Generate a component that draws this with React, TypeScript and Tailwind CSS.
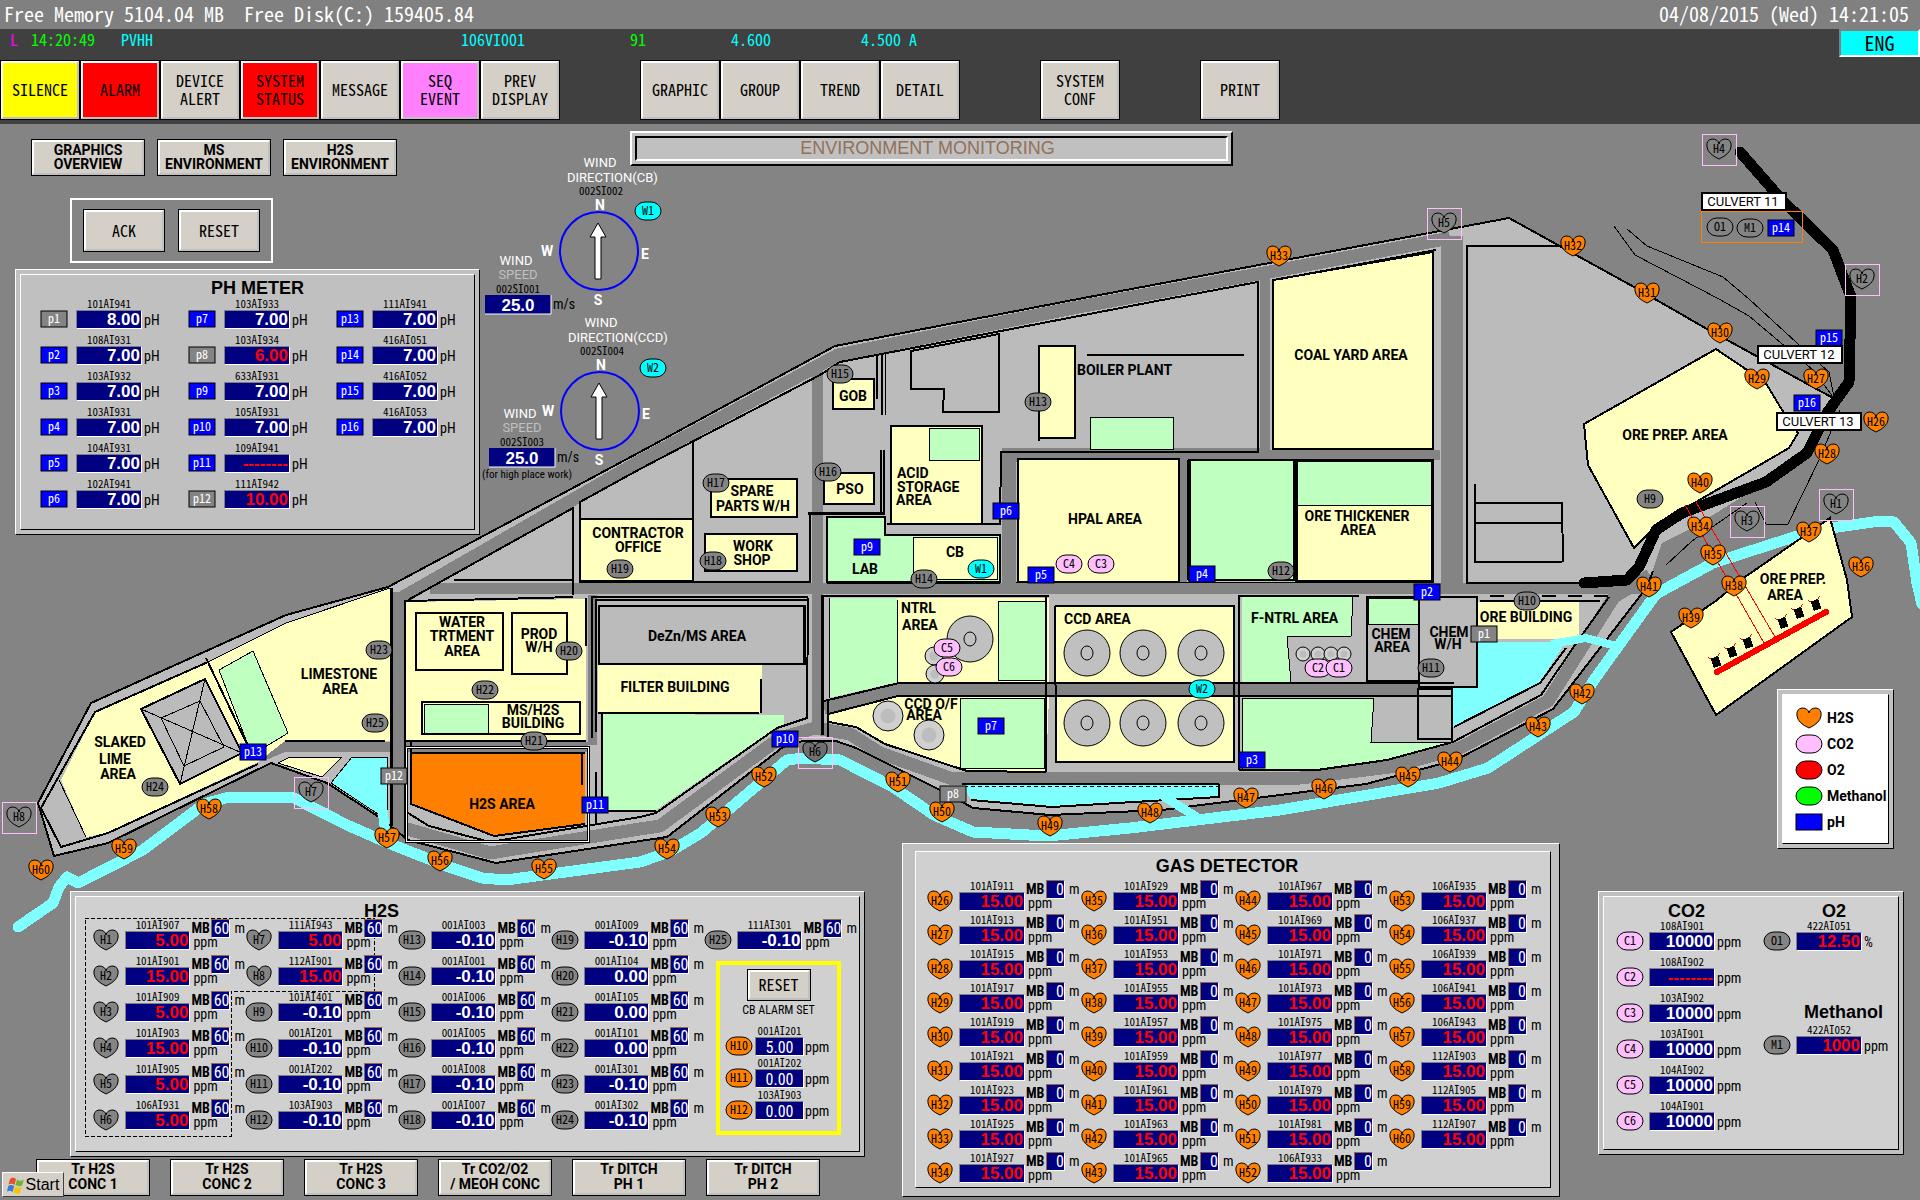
import React, { type ReactNode } from "react";

/* ---------- shared marker symbols ---------- */

type Kind = "heart" | "round" | "box";

const HEART = "M0 -5 Q-1 -10 -7 -10 Q-13 -9 -12 -2 Q-11 5 0 10 Q11 5 12 -2 Q13 -9 7 -10 Q1 -10 0 -5Z";

const MONO = "font-['Noto_Sans_Mono_CJK_JP','Liberation_Mono',monospace]";

function Marker({ kind, label, fill, x, y, color = "#000000" }: { kind: Kind; label?: string; fill: string; x: number; y: number; color?: string }) {
  return (
    <g transform={`translate(${x} ${y})`}>
      {kind === "heart" && <path d={HEART} fill={fill} stroke="#000" />}
      {kind === "round" && <rect x={-13} y={-9} width={26} height={18} rx={10} ry={9} fill={fill} stroke="#000" />}
      {kind === "box" && <rect x={-13} y={-8} width={26} height={16} fill={fill} stroke="#000" />}
      {label && (
        <text y={4} textAnchor="middle" fill={color} className="font-['Noto_Sans_Mono_CJK_JP','Liberation_Mono',monospace] text-[12px]">
          {label}
        </text>
      )}
    </g>
  );
}

function Icon({ kind, label, fill, color }: { kind: Kind; label?: string; fill: string; color?: string }) {
  return (
    <svg viewBox="-14 -11 28 22" className="h-[22px] w-7 shrink-0">
      <Marker kind={kind} label={label} fill={fill} x={0} y={0} color={color} />
    </svg>
  );
}

/* ---------- site map ---------- */

const GREY = "#848484";
const LIGHT = "#bbbbbb";
const YELLOW = "#ffffbf";
const GREEN = "#bfffbf";
const WATER = "#80ffff";
const ORANGE = "#ff8000";
const PINK = "#ffbfff";

const SITE =
  "388,587 640,452 835,346 1073,300 1280,261 1509,218 1634,287 1707,329 1833,398 1807,453 1766,482 1692,528 1662,543 1647,587 1553,709 1456,760 1366,784 1280,795 1162,810 1050,815 973,808 942,791 856,748 836,741 803,741 783,747 667,837 640,841 496,863 408,840 376,815 327,783 271,763 108,843 54,856 38,803 91,703 286,615";

const ROADS: [string, number][] = [
  ["398,600 640,461 838,355 1073,308 1280,270 1450,238", 13],
  ["817,362 817,735", 11],
  ["430,588 1650,588", 11],
  ["398,592 398,838", 12],
  ["592,595 592,745", 9],
  ["265,755 284,747 588,747", 10],
  ["1009,583 1009,455 1265,455", 14],
  ["1265,278 1265,455 1440,455", 10],
  ["1452,236 1452,590", 22],
  ["1183,459 1183,583", 7],
  ["824,708 898,690 1454,690", 12],
  ["404,828 490,853 640,829 660,826 780,738 815,728 850,734 880,753 950,778 1300,778 1390,767 1460,748 1548,701 1614,597 1650,575", 13],
];

const AREAS: [string, string][] = [
  [YELLOW, "390,588 286,623 208,662 95,712 61,780 86,837 107,833 258,762 285,741 390,741"],
  [LIGHT, "59,780 41,808 61,847 86,837"],
  [YELLOW, "406,602 586,599 586,740 406,741"],
  [ORANGE, "411,753 585,754 585,823 494,836 411,804"],
  [LIGHT, "598,598 808,598 808,664 598,664"],
  [YELLOW, "598,665 762,665 762,713 598,713"],
  [GREEN, "603,714 784,715 784,724 773,730 656,810 603,811"],
  [YELLOW, "829,598 1049,598 1049,682 898,682 829,698"],
  [GREEN, "829,598 897,598 898,682 829,698"],
  [YELLOW, "829,715 898,697 1049,697 1046,772 967,771 885,744 856,727 829,722"],
  [YELLOW, "1055,606 1234,606 1234,682 1055,682"],
  [YELLOW, "1056,697 1235,697 1235,762 1056,762"],
  [GREEN, "1242,597 1353,597 1351,636 1287,636 1291,682 1242,682"],
  [YELLOW, "1478,602 1579,602 1579,639 1478,639"],
];

const OUTLINED: [string, string, number][] = [
  [GREEN, "253,651 288,733 265,747 248,745 219,670", 1],
  [LIGHT, "141,709 205,679 242,753 180,784", 2],
  ["none", "161,718 200,701 224,747 184,766", 1],
  [YELLOW, "278,763 290,757 342,757 322,777", 1],
  [WATER, "352,757 387,757 387,820 331,783", 1],
  ["none", "416,613 503,613 503,670 416,670", 2],
  ["none", "512,613 567,613 567,674 512,674", 2],
  ["none", "422,702 580,702 580,734 422,734", 2],
  [GREEN, "424,704 488,704 488,733 424,733", 1],
  [LIGHT, "599,606 805,606 805,664 599,664", 2],
  [YELLOW, "580,519 693,519 693,581 580,581", 2],
  [YELLOW, "711,479 797,479 797,517 711,517", 2],
  [YELLOW, "705,534 797,534 797,571 705,571", 2],
  [YELLOW, "833,379 874,379 874,409 833,409", 2],
  [YELLOW, "824,473 874,473 874,504 824,504", 2],
  [YELLOW, "891,426 982,426 982,524 891,524", 2],
  [GREEN, "929,428 979,428 979,460 929,460", 1],
  ["none", "911,351 999,334 999,412 943,412 944,389 911,389", 2],
  [YELLOW, "1039,346 1075,346 1075,438 1039,438", 2],
  [GREEN, "1090,417 1173,417 1173,449 1090,449", 1],
  [GREEN, "827,517 885,517 885,535 1000,535 1000,582 827,582", 2],
  [YELLOW, "913,537 997,537 997,579 913,579", 1],
  [YELLOW, "1018,459 1179,459 1179,582 1018,582", 2],
  [GREEN, "1189,460 1294,460 1294,580 1189,580", 2],
  [YELLOW, "1296,460 1432,460 1432,581 1296,581", 3],
  [GREEN, "1297,461 1431,461 1431,505 1297,505", 1],
  [YELLOW, "1273,280 1433,252 1433,449 1273,449", 2],
  [GREEN, "998,601 1046,601 1046,680 998,680", 1],
  [GREEN, "960,698 1044,698 1044,768 960,768", 1],
  [GREEN, "1242,698 1374,698 1371,742 1453,742 1387,760 1317,770 1242,770", 1],
  [LIGHT, "1367,597 1419,597 1419,681 1367,681", 2],
  [GREEN, "1368,598 1419,598 1419,624 1368,624", 1],
  [LIGHT, "1419,597 1477,597 1477,687 1419,687", 2],
  [LIGHT, "1418,689 1452,689 1452,739 1418,739", 2],
  [YELLOW, "1716,349 1747,370 1767,385 1782,410 1798,433 1789,448 1696,502 1660,522 1634,548 1588,465 1584,424", 2],
];

const LINES: [string, number][] = [
  ["388,587 640,452 835,346 1073,300 1280,261 1509,218 1634,287 1707,329 1833,398", 2],
  ["388,587 286,615 91,703 38,803 54,856 108,843 271,763 327,783 376,815 408,840 496,863 640,841 667,837 783,747 803,741 836,741 856,748 942,791 973,808 1050,815 1162,810 1280,795 1366,784 1456,760 1553,709 1647,587 1653,571", 2],
  ["390,588 286,623 208,662", 1],
  ["206,658 247,744", 2],
  ["208,662 95,712 41,808 61,847 108,833 258,764", 2],
  ["59,780 86,837", 1],
  ["141,709 242,753", 1],
  ["205,679 180,784", 1],
  ["408,600 573,508 573,595", 2],
  ["580,583 580,502 640,469 820,375 840,362 1162,300 1258,282 1258,452 1001,452 1000,524 887,524", 2],
  ["1280,279 1436,250", 2],
  ["454,580 573,580", 2],
  ["693,440 693,580", 2],
  ["580,582 810,582 810,514", 2],
  ["808,513 885,513", 3],
  ["877,355 877,399", 2],
  ["882,353 882,415", 2],
  ["885,353 885,415", 1],
  ["881,450 881,513", 2],
  ["884,450 884,513", 2],
  ["1039,436 1039,441", 2],
  ["1087,355 1244,355", 2],
  ["827,583 1000,583", 2],
  ["1016,582 1430,582", 1],
  ["1189,460 1189,580", 4],
  ["1560,246 1467,246 1467,583 1600,583", 2],
  ["1475,484 1475,562 1562,562", 2],
  ["1474,503 1562,503 1563,562", 2],
  ["1474,523 1562,523", 2],
  ["285,741 385,741", 2],
  ["391,588 391,826", 3],
  ["405,600 405,838", 2],
  ["406,601 450,600 500,599 573,597", 2],
  ["586,598 586,646", 2],
  ["406,741 586,741", 2],
  ["411,753 585,753", 2],
  ["582,754 582,785", 2],
  ["411,742 411,804 494,836 585,824", 2],
  ["408,813 429,826 490,842 640,817 656,813 777,728 807,718 808,598", 2],
  ["592,738 592,597 808,597", 2],
  ["596,732 596,600 808,600", 2],
  ["596,772 596,825", 2],
  ["598,664 808,664", 2],
  ["803,606 803,664", 1],
  ["598,713 759,713", 2],
  ["761,679 761,713", 2],
  ["602,714 602,811 656,811", 2],
  ["821,596 1049,596", 2],
  ["822,596 822,735", 3],
  ["828,700 828,737", 2],
  ["829,598 829,698", 1],
  ["897,598 898,682", 1],
  ["824,701 899,683 1454,683", 2],
  ["828,714 898,696 1452,696", 2],
  ["829,722 856,727 885,744 967,771 1046,772", 2],
  ["1046,596 1046,772", 2],
  ["1055,606 1234,606 1234,762 1056,762 1055,606", 2],
  ["1239,770 1239,596 1359,596", 2],
  ["1353,597 1351,636 1287,636 1291,682", 1],
  ["1239,770 1317,770 1387,760 1453,742 1541,695 1575,645 1609,597", 2],
  ["1480,601 1600,601", 2],
  ["1452,688 1452,742", 2],
  ["1419,687 1477,687 1477,600", 2],
];

const RIVER =
  "18,927 53,903 59,887 67,877 78,883 143,850 204,804 229,797 294,798 347,825 388,843 449,867 482,878 506,880 640,862 669,852 701,833 787,760 803,758 840,760 893,787 934,815 973,832 1048,836 1130,828 1280,810 1439,783 1488,768 1574,712 1594,680 1635,623 1656,594 1713,563 1794,537 1831,528 1880,521 1894,522 1911,543 1917,583 1922,604";

const PIPE =
  "1740,152 1782,200 1833,250 1851,297 1849,382 1827,413 1807,453 1766,482 1709,503 1682,513 1656,530 1639,567 1627,580 1584,583";

const TRAILS = [
  "1614,226 1635,255 1719,299 1749,316 1813,370 1833,397",
  "1627,229 1647,246 1723,277 1749,299 1821,365 1829,372 1834,397",
  "1840,410 1819,460 1788,524 1766,524 1755,502",
  "1666,565 1692,541 1747,503",
];

const TANKS: [number, number, number][] = [
  [934, 656, 9], [935, 674, 9], [888, 716, 15], [929, 735, 15],
  [1303, 654, 7], [1318, 654, 7], [1331, 654, 7], [1344, 654, 7],
];

const THICKENERS: [number, number][] = [
  [970, 639], [1087, 653], [1143, 653], [1201, 653], [1087, 723], [1143, 723], [1201, 723],
];

const LABELS: [string, number, number, ("start" | "middle")?][] = [
  ["SLAKED", 120, 747], ["LIME", 115, 764], ["AREA", 118, 779],
  ["LIMESTONE", 339, 679], ["AREA", 340, 694],
  ["WATER", 462, 627], ["TRTMENT", 462, 641], ["AREA", 462, 656],
  ["PROD", 539, 639], ["W/H", 539, 652],
  ["MS/H2S", 533, 715], ["BUILDING", 533, 728],
  ["H2S AREA", 502, 809],
  ["DeZn/MS AREA", 697, 641], ["FILTER BUILDING", 675, 692],
  ["CONTRACTOR", 638, 538], ["OFFICE", 638, 552],
  ["SPARE", 752, 496], ["PARTS W/H", 753, 511],
  ["WORK", 753, 551], ["SHOP", 752, 565],
  ["GOB", 853, 401], ["PSO", 850, 494],
  ["ACID", 897, 478, "start"], ["STORAGE", 897, 492, "start"], ["AREA", 896, 505, "start"],
  ["LAB", 865, 574], ["CB", 955, 557],
  ["BOILER PLANT", 1077, 375, "start"],
  ["HPAL AREA", 1105, 524], ["COAL YARD AREA", 1351, 360],
  ["ORE THICKENER", 1357, 521], ["AREA", 1358, 535],
  ["ORE PREP. AREA", 1675, 440],
  ["ORE PREP.", 1793, 584], ["AREA", 1785, 600],
  ["NTRL", 901, 613, "start"], ["AREA", 902, 630, "start"],
  ["CCD O/F", 931, 709], ["AREA", 924, 720],
  ["CCD AREA", 1064, 624, "start"], ["F-NTRL AREA", 1251, 623, "start"],
  ["CHEM", 1391, 639], ["AREA", 1392, 652],
  ["CHEM", 1449, 637], ["W/H", 1448, 649],
  ["ORE BUILDING", 1526, 622],
];

const HEARTS: [string, number, number][] = [
  ["H33", 1279, 256], ["H32", 1573, 246], ["H31", 1647, 293], ["H30", 1720, 333], ["H29", 1757, 379],
  ["H27", 1816, 379], ["H26", 1876, 422], ["H28", 1827, 454], ["H40", 1700, 483], ["H34", 1700, 527],
  ["H35", 1713, 555], ["H37", 1809, 532], ["H36", 1861, 567], ["H38", 1734, 586], ["H41", 1649, 587],
  ["H39", 1691, 618], ["H42", 1582, 694], ["H43", 1538, 727], ["H44", 1450, 762], ["H45", 1408, 777],
  ["H46", 1324, 789], ["H47", 1246, 798], ["H48", 1150, 813], ["H49", 1050, 826], ["H50", 942, 812],
  ["H51", 898, 782], ["H52", 764, 777], ["H53", 718, 817], ["H54", 667, 849], ["H55", 544, 869],
  ["H56", 440, 861], ["H57", 387, 838], ["H58", 209, 809], ["H59", 124, 849], ["H60", 41, 870],
];

const FRAMED: [string, number, number][] = [
  ["H4", 1719, 149], ["H5", 1444, 223], ["H2", 1862, 279], ["H1", 1836, 504],
  ["H3", 1747, 521], ["H6", 815, 752], ["H7", 311, 792], ["H8", 19, 817],
];

const ROUNDS: [string, number, number, string][] = [
  ["H15", 840, 374, GREY], ["H13", 1038, 402, GREY], ["H16", 828, 472, GREY], ["H17", 716, 483, GREY],
  ["H18", 713, 561, GREY], ["H14", 924, 579, GREY], ["H19", 620, 569, GREY], ["H12", 1281, 571, GREY],
  ["H9", 1650, 499, GREY], ["H10", 1527, 601, GREY], ["H11", 1431, 668, GREY], ["H20", 569, 651, GREY],
  ["H22", 485, 690, GREY], ["H21", 534, 741, GREY], ["H23", 379, 650, GREY], ["H25", 375, 723, GREY],
  ["H24", 155, 787, GREY], ["O1", 1720, 227, GREY], ["M1", 1750, 228, GREY],
  ["C4", 1069, 564, PINK], ["C3", 1101, 564, PINK], ["C5", 947, 648, PINK], ["C6", 949, 667, PINK],
  ["C2", 1318, 668, PINK], ["C1", 1339, 668, PINK],
  ["W1", 981, 569, "#00ffff"], ["W2", 1202, 689, "#00ffff"], ["W1", 648, 211, "#00ffff"], ["W2", 653, 368, "#00ffff"],
];

const PROBES: [string, number, number, string][] = [
  ["p14", 1781, 228, "#0000ff"], ["p15", 1829, 338, "#0000ff"], ["p16", 1807, 403, "#0000ff"],
  ["p2", 1427, 592, "#0000ff"], ["p9", 867, 547, "#0000ff"], ["p5", 1041, 575, "#0000ff"],
  ["p6", 1006, 511, "#0000ff"], ["p4", 1202, 574, "#0000ff"], ["p1", 1484, 634, GREY],
  ["p3", 1252, 760, "#0000ff"], ["p7", 991, 726, "#0000ff"], ["p8", 953, 794, GREY],
  ["p10", 785, 739, "#0000ff"], ["p11", 595, 805, "#0000ff"], ["p12", 394, 776, GREY],
  ["p13", 253, 752, "#0000ff"],
];

const CULVERTS: [string, number, number][] = [
  ["CULVERT 11", 1702, 193], ["CULVERT 12", 1758, 346], ["CULVERT 13", 1777, 413],
];

const STACKERS: [number, number][] = [
  [1716, 662], [1732, 652], [1748, 643], [1783, 623], [1799, 613], [1816, 605],
];

function Wind({ x, y, name, dirTag, sx, sy, speedTag, note }: { x: number; y: number; name: string; dirTag: string; sx: number; sy: number; speedTag: string; note?: string }) {
  return (
    <g textAnchor="middle" className="font-['Roboto',sans-serif] text-[13px]">
      <g fill="#fff">
        <text x={x + 1} y={y - 84}>WIND</text>
        <text x={x - 32} y={y - 69} textAnchor="start">{name}</text>
        <g className="text-[14px] font-bold">
          <text x={x + 1} y={y - 41}>N</text>
          <text x={x - 52} y={y + 5}>W</text>
          <text x={x + 46} y={y + 8}>E</text>
          <text x={x - 1} y={y + 54}>S</text>
        </g>
        <path d={`M${x - 1} ${y - 28}l8 14h-5v42h-6v-42h-5z`} stroke="#000" />
        <text x={sx} y={sy - 30}>WIND</text>
      </g>
      <circle cx={x} cy={y} r={39} fill="none" stroke="#0000ff" strokeWidth={2} />
      <text x={sx + 2} y={sy - 16} fill="#c0c0c0">SPEED</text>
      <g className="font-['Noto_Sans_Mono_CJK_JP','Liberation_Mono',monospace] text-[11px]">
        <text x={x + 2} y={y - 56}>{dirTag}</text>
        <text x={sx + 2} y={sy - 2}>{speedTag}</text>
      </g>
      <rect x={sx - 31} y={sy} width={66} height={19} fill="#000080" />
      <path d={`M${sx - 31} ${sy + 19}h66v-19`} fill="none" stroke="#fff" />
      <text x={sx + 2} y={sy + 16} fill="#fff" className="font-['Liberation_Sans',sans-serif] text-[17px] font-bold">25.0</text>
      <text x={sx + 37} y={sy + 14} textAnchor="start" className="font-['Roboto_Condensed',sans-serif] text-[14px]">m/s</text>
      {note && <text x={sx + 7} y={sy + 30} className="font-['Roboto_Condensed',sans-serif] text-[11px]">{note}</text>}
    </g>
  );
}

function SiteMap() {
  return (
    <svg viewBox="0 124 1920 1076" className="absolute inset-x-0 top-0 w-full" role="img" aria-label="Site map">
      <g fill="none" shapeRendering="crispEdges">
        <polygon points={SITE} fill={LIGHT} />
        {ROADS.map(([p, w]) => <polyline key={p} points={p} stroke={GREY} strokeWidth={w} />)}
        {AREAS.map(([f, p]) => <polygon key={p} points={p} fill={f} />)}
        {OUTLINED.map(([f, p, w]) => <polygon key={p} points={p} fill={f} stroke="#000" strokeWidth={w} />)}
        <polygon points="1478,642 1566,642 1539,683 1453,727 1453,688 1478,688" fill={WATER} />
        <polygon points="962,784 1219,784 1219,797 1150,801 1052,807 971,800" fill={WATER} />
        <polyline points="962,784 1219,784" stroke="#000" strokeWidth={2} />
        <polyline points="964,786 1219,786" stroke="#000" strokeWidth={1} strokeDasharray="4 3" />
        <polyline points="1219,784 1219,797 1150,801 1052,807 971,800" stroke="#000" strokeWidth={2} />
        <polyline points="1566,648 1540,683 1454,727" stroke="#000" strokeWidth={2} />
        <polyline points="1490,596 1609,596" stroke="#000" strokeWidth={2} strokeDasharray="14 12" />
        {LINES.map(([p, w]) => <polyline key={p} points={p} stroke="#000" strokeWidth={w} />)}
        <rect x={406} y={747} width={182} height={94} stroke="#000" strokeWidth={3} />
        <rect x={406} y={747} width={182} height={94} stroke="#fff" />
        <g stroke={WATER}>
          <polyline points={RIVER} strokeWidth={11} strokeLinecap="round" strokeLinejoin="round" />
          <polyline points="382,806 386,838" strokeWidth={10} />
          <polyline points="1163,796 1203,821" strokeWidth={9} />
          <polyline points="1551,644 1586,638 1616,646" strokeWidth={8} />
        </g>
        {TRAILS.map((p) => <polyline key={p} points={p} stroke="#000" />)}
        <polygon
          points="1830,518 1745,577 1717,600 1671,632 1716,715 1852,617 1847,580"
          fill={YELLOW} stroke="#000" strokeWidth={2}
        />
        <polyline points={PIPE} stroke="#000" strokeWidth={11} strokeLinecap="round" strokeLinejoin="round" />
        <g stroke="#f00">
          <path d="M1685 505L1764 643M1696 502L1775 637" strokeWidth={1} />
          <path d="M1717 672L1826 612" strokeWidth={6} strokeLinecap="round" />
          {STACKERS.map(([x, y]) => (
            <g key={x} transform={`translate(${x} ${y}) rotate(-20)`}>
              <path d="M-6 -7l3 3M6 -7l-3 3" />
              <path d="M-4 -5h8v10h-8z" fill="#000" stroke="none" />
            </g>
          ))}
        </g>
        <rect x={1701} y={211} width={101} height={31} stroke={ORANGE} />
      </g>

      {TANKS.map(([x, y, r]) => (
        <g key={`${x}-${y}`}>
          <circle cx={x} cy={y} r={r} fill="#d0d0d0" stroke="#000" />
          <circle cx={x} cy={y} r={r / 2} fill="#bdbdbd" />
        </g>
      ))}
      {THICKENERS.map(([x, y]) => (
        <g key={`${x}-${y}`} fill="#c0c0c0" stroke="#000">
          <circle cx={x} cy={y} r={23} />
          <ellipse cx={x} cy={y} rx={6} ry={7} />
        </g>
      ))}

      <g className="font-['Roboto',sans-serif] text-[14px] font-bold">
        {LABELS.map(([t, x, y, a]) => (
          <text key={`${t}-${x}-${y}`} x={x} y={y} textAnchor={a ?? "middle"}>{t}</text>
        ))}
      </g>

      {FRAMED.map(([t, x, y]) => (
        <g key={t}>
          <rect x={x - 17} y={y - 15} width={34} height={31} fill="none" stroke={PINK} shapeRendering="crispEdges" />
          <Marker kind="heart" label={t} x={x} y={y} fill={t === "H6" ? "#707070" : GREY} />
        </g>
      ))}
      {HEARTS.map(([t, x, y]) => <Marker key={t} kind="heart" label={t} x={x} y={y} fill={ORANGE} />)}
      {ROUNDS.map(([t, x, y, f]) => <Marker key={`${t}-${x}`} kind="round" label={t} x={x} y={y} fill={f} />)}
      {PROBES.map(([t, x, y, f]) => <Marker key={t} kind="box" label={t} x={x} y={y} fill={f} color="#ffffff" />)}
      {CULVERTS.map(([t, x, y]) => (
        <g key={t}>
          <rect x={x} y={y} width={84} height={17} fill="#fff" stroke="#000" strokeWidth={2} />
          <text x={x + 41} y={y + 13} textAnchor="middle" className="font-['Roboto',sans-serif] text-[13px]">{t}</text>
        </g>
      ))}
      <Wind x={599} y={251} name="DIRECTION(CB)" dirTag="002SI002" sx={516} sy={295} speedTag="002SI001" />
      <Wind x={600} y={411} name="DIRECTION(CCD)" dirTag="002SI004" sx={520} sy={448} speedTag="002SI003" note="(for high place work)" />
    </svg>
  );
}

/* ---------- controls ---------- */

function Button({ children, className }: { children: ReactNode; className: string }) {
  return (
    <button
      type="button"
      className={`flex shrink-0 items-center justify-center whitespace-pre-line border-2 border-t-white border-l-white border-r-[#c0c0c0] border-b-[#c0c0c0] pb-0.5 text-center outline outline-1 -outline-offset-0 outline-black ${className}`}
    >
      {children}
    </button>
  );
}

const KEYS: [string, string][][] = [
  [
    ["SILENCE", "bg-[#ffff00]"],
    ["ALARM", "bg-[#ff0000]"],
    ["DEVICE\nALERT", "bg-[#d4d0c8]"],
    ["SYSTEM\nSTATUS", "bg-[#ff0000]"],
    ["MESSAGE", "bg-[#d4d0c8]"],
    ["SEQ\nEVENT", "bg-[#ff80ff]"],
    ["PREV\nDISPLAY", "bg-[#d4d0c8]"],
  ],
  [
    ["GRAPHIC", "bg-[#d4d0c8]"],
    ["GROUP", "bg-[#d4d0c8]"],
    ["TREND", "bg-[#d4d0c8]"],
    ["DETAIL", "bg-[#d4d0c8]"],
  ],
  [["SYSTEM\nCONF", "bg-[#d4d0c8]"]],
  [["PRINT", "bg-[#d4d0c8]"]],
];

function Header() {
  return (
    <header className={`font-light ${MONO}`}>
      <div className="flex h-[29px] justify-between bg-[#808080] pr-[11px] pl-1 text-[20px] leading-[27px] whitespace-pre text-white">
        <span>Free Memory 5104.04 MB  Free Disk(C:) 159405.84</span>
        <span>04/08/2015 (Wed) 14:21:05</span>
      </div>
      <div className="h-[95px] bg-[#404040]">
        <div className="flex h-8 items-start text-[16px] leading-[20px] text-[#00ffff]">
          <span className="ml-[10px] w-[21px] text-[#ff00ff]">L</span>
          <span className="w-[90px] text-[#00ff00]">14:20:49</span>
          <span className="w-[340px]">PVHH</span>
          <span className="w-[169px]">106VI001</span>
          <span className="w-[101px] text-[#00ff00]">91</span>
          <span className="w-[130px]">4.600</span>
          <span>4.500 A</span>
          <button type="button" className="ml-auto h-7 w-[81px] border-2 border-t-[#808080] border-r-white border-b-white border-l-[#808080] bg-[#00ffff] text-[20px] leading-[20px] text-black">
            ENG
          </button>
        </div>
        <nav className="flex gap-20">
          {KEYS.map((group) => (
            <div key={group[0][0]} className="flex">
              {group.map(([label, bg]) => (
                <span key={label} className="w-20 px-px">
                  <Button className={`h-[58px] w-full text-[16px] leading-[18px] ${bg}`}>{label}</Button>
                </span>
              ))}
            </div>
          ))}
        </nav>
      </div>
    </header>
  );
}

/* ---------- panels ---------- */

const FACE = "bg-[#d4d0c8] h-[35px] w-28 font-['Roboto',sans-serif] text-[14px] font-bold";

function Panel({ children, className = "", pad = "p-1", inner = "bg-[#d0d0d0]" }: { children: ReactNode; className?: string; pad?: string; inner?: string }) {
  return (
    <section className={`border border-t-white border-r-black border-b-black border-l-white bg-[#c0c0c0] ${pad} ${className}`}>
      <div className={`relative h-full border border-t-white border-r-black border-b-black border-l-white ${inner}`}>{children}</div>
    </section>
  );
}

function Heading({ children, className = "" }: { children: ReactNode; className?: string }) {
  return <h2 className={`font-['Liberation_Sans',sans-serif] text-[18px] font-bold ${className}`}>{children}</h2>;
}

type Reading = { kind: Kind; id: string; fill: string; tag: string; value: string; alarm?: boolean; unit: string; mb?: string; idColor?: string };

function Tag({ children }: { children: ReactNode }) {
  return <div className={`h-3 text-center text-[11px] leading-[11px] ${MONO}`}>{children}</div>;
}

function ReadingCell({ r, pitch, iconCol = "w-[33px]" }: { r: Reading; pitch: string; iconCol?: string }) {
  return (
    <div className={`flex items-start ${pitch}`}>
      <div className={`pt-[10px] ${iconCol}`}>
        <Icon kind={r.kind} label={r.id} fill={r.fill} color={r.idColor} />
      </div>
      <div className="w-[66px]">
        <Tag>{r.tag}</Tag>
        <div
          className={`h-[19px] border border-t-[#808080] border-r-white border-b-white border-l-[#808080] bg-[#000080] pr-px text-right font-['Liberation_Sans',sans-serif] text-[17px] leading-[17px] font-bold ${r.alarm ? "text-[#ff0000]" : "text-white"}`}
        >
          {r.value}
        </div>
      </div>
      <div className="pl-px font-['Roboto_Condensed',sans-serif] text-[14px]">
        {r.mb ? (
          <>
            <div className="flex h-[19px] items-center">
              <span className="w-5 font-bold">MB</span>
              <span className="mr-1 h-[19px] w-[19px] border border-t-[#906848] border-r-white border-b-white border-l-[#906848] bg-[#000080] text-right text-[16px] leading-[18px] text-white">
                {r.mb}
              </span>
              m
            </div>
            <div className="pl-0.5 leading-[9px]">{r.unit}</div>
          </>
        ) : (
          <div className="pt-3 pl-px leading-[20px]">{r.unit}</div>
        )}
      </div>
    </div>
  );
}

const ph = (id: string, tag: string, value = "7.00", alarm = false, dim = false): Reading => ({
  kind: "box", id, tag, value, alarm, unit: "pH", fill: dim ? "#848484" : "#0000ff", idColor: "#ffffff",
});

const PH: Reading[][] = [
  [ph("p1", "101AI941", "8.00", false, true), ph("p2", "108AI931"), ph("p3", "103AI932"), ph("p4", "103AI931"), ph("p5", "104AI931"), ph("p6", "102AI941")],
  [ph("p7", "103AI933"), ph("p8", "103AI934", "6.00", true, true), ph("p9", "633AI931"), ph("p10", "105AI931"), ph("p11", "109AI941", "--------", true), ph("p12", "111AI942", "10.00", true, true)],
  [ph("p13", "111AI941"), ph("p14", "416AI051"), ph("p15", "416AI052"), ph("p16", "416AI053")],
];

const h2s = (id: string, tag: string, value: string, kind: Kind = "round"): Reading => ({
  kind, id, tag, value, alarm: kind === "heart", unit: "ppm", mb: "60", fill: "#848484",
});

const H2S: Reading[][] = [
  [h2s("H1", "101AI907", "5.00", "heart"), h2s("H2", "101AI901", "15.00", "heart"), h2s("H3", "101AI909", "5.00", "heart"), h2s("H4", "101AI903", "15.00", "heart"), h2s("H5", "101AI905", "5.00", "heart"), h2s("H6", "106AI931", "5.00", "heart")],
  [h2s("H7", "111AI943", "5.00", "heart"), h2s("H8", "112AI901", "15.00", "heart"), h2s("H9", "101AI401", "-0.10"), h2s("H10", "001AI201", "-0.10"), h2s("H11", "001AI202", "-0.10"), h2s("H12", "103AI903", "-0.10")],
  [h2s("H13", "001AI003", "-0.10"), h2s("H14", "001AI001", "-0.10"), h2s("H15", "001AI006", "-0.10"), h2s("H16", "001AI005", "-0.10"), h2s("H17", "001AI008", "-0.10"), h2s("H18", "001AI007", "-0.10")],
  [h2s("H19", "001AI009", "-0.10"), h2s("H20", "001AI104", "0.00"), h2s("H21", "001AI105", "0.00"), h2s("H22", "001AI101", "0.00"), h2s("H23", "001AI301", "-0.10"), h2s("H24", "001AI302", "-0.10")],
];

const gas = (n: number, tag: string): Reading => ({
  kind: "heart", id: `H${n}`, tag, value: "15.00", alarm: true, unit: "ppm", mb: "0", fill: ORANGE,
});

const GAS_TAGS = [
  ["101AI911", "101AI913", "101AI915", "101AI917", "101AI919", "101AI921", "101AI923", "101AI925", "101AI927"],
  ["101AI929", "101AI951", "101AI953", "101AI955", "101AI957", "101AI959", "101AI961", "101AI963", "101AI965"],
  ["101AI967", "101AI969", "101AI971", "101AI973", "101AI975", "101AI977", "101AI979", "101AI981", "106AI933"],
  ["106AI935", "106AI937", "106AI939", "106AI941", "106AI943", "112AI903", "112AI905", "112AI907"],
];

const co2 = (id: string, tag: string, value = "10000"): Reading => ({
  kind: "round", id, tag, value, alarm: value !== "10000", unit: "ppm", fill: PINK,
});

const CO2 = [co2("C1", "108AI901"), co2("C2", "108AI902", "--------"), co2("C3", "103AI902"), co2("C4", "103AI901"), co2("C5", "104AI902"), co2("C6", "104AI901")];

const SETPOINTS = [
  ["H10", "001AI201", "5.00"],
  ["H11", "001AI202", "0.00"],
  ["H12", "103AI903", "0.00"],
];

function PhPanel() {
  return (
    <Panel className="h-[266px] w-[465px]" inner="bg-[#c0c0c0]">
      <Heading className="pt-[3px] pl-5 text-center leading-[20px]">PH METER</Heading>
      <div className="flex pl-[19px]">
        {PH.map((col, i) => (
          <div key={i} className="w-[148px] shrink-0">
            {col.map((r) => <ReadingCell key={r.id} r={r} pitch="h-9" iconCol="w-9" />)}
          </div>
        ))}
      </div>
    </Panel>
  );
}

function AlarmSet() {
  return (
    <div className="mt-[6px] ml-3 flex h-[174px] w-[125px] flex-col items-center border-4 border-[#ffff00] pt-[5px]">
      <Button className={`h-[30px] w-[62px] bg-[#d4d0c8] text-[16px] font-light ${MONO}`}>RESET</Button>
      <p className="mt-1 mb-2 font-['Roboto_Condensed',sans-serif] text-[12px] leading-[13px]">CB ALARM SET</p>
      {SETPOINTS.map(([id, tag, value]) => (
        <div key={id} className="flex h-8 w-full items-start pl-[5px]">
          <div className="w-[30px] pt-[10px]">
            <Icon kind="round" label={id} fill={ORANGE} />
          </div>
          <div className="w-[49px]">
            <Tag>{tag}</Tag>
            <div className="h-[19px] border border-t-[#808080] border-r-white border-b-white border-l-[#808080] bg-[#000080] text-center font-['Roboto_Condensed',sans-serif] text-[16px] leading-[19px] text-white">
              {value}
            </div>
          </div>
          <span className="pt-3 pl-px font-['Roboto_Condensed',sans-serif] text-[14px] leading-[20px]">ppm</span>
        </div>
      ))}
    </div>
  );
}

function H2sPanel() {
  return (
    <Panel className="h-[266px] w-[795px]">
      <svg viewBox="0 0 300 226" className="absolute top-5 left-2 h-[226px] w-[300px]" shapeRendering="crispEdges" aria-hidden="true">
        <path d="M1 1H290V74H147V219H1Z" fill="none" stroke="#000" strokeDasharray="4 2" />
      </svg>
      <div className="relative">
        <Heading className="pt-[6px] pl-[288px] leading-[17px]">H2S</Heading>
        <div className="-mt-px flex pl-4">
          {H2S.map((col, i) => (
            <div key={i} className="w-[153px]">
              {col.map((r) => <ReadingCell key={r.id} r={r} pitch="h-9" />)}
            </div>
          ))}
          <div className="w-[153px]">
            <ReadingCell r={h2s("H25", "111AI301", "-0.10")} pitch="h-9" />
            <AlarmSet />
          </div>
        </div>
      </div>
    </Panel>
  );
}

function GasPanel() {
  return (
    <Panel className="h-[354px] w-[658px]" pad="pt-[7px] pr-2 pb-2 pl-3">
      <Heading className="pt-1 pr-3 text-center leading-[20px]">GAS DETECTOR</Heading>
      <div className="flex pt-1 pl-[10px]">
        {GAS_TAGS.map((tags, c) => (
          <div key={c} className="w-[154px]">
            {tags.map((t, i) => <ReadingCell key={t} r={gas(26 + c * 9 + i, t)} pitch="h-[34px]" />)}
          </div>
        ))}
      </div>
    </Panel>
  );
}

function Co2Panel() {
  return (
    <Panel className="mb-[42px] h-[264px] w-[306px]">
      <div className="flex pl-3">
        <div className="w-[147px]">
          <Heading className="pt-[5px] pl-[52px] leading-[18px]">CO2</Heading>
          {CO2.map((r) => <ReadingCell key={r.id} r={r} pitch="h-9" />)}
        </div>
        <div>
          <Heading className="pt-[5px] pl-[59px] leading-[18px]">O2</Heading>
          <ReadingCell r={{ kind: "round", id: "O1", fill: "#848484", tag: "422AI051", value: "12.50", alarm: true, unit: "%" }} pitch="h-20" />
          <Heading className="pl-[41px] leading-[24px]">Methanol</Heading>
          <ReadingCell r={{ kind: "round", id: "M1", fill: "#848484", tag: "422AI052", value: "1000", alarm: true, unit: "ppm" }} pitch="h-9" />
        </div>
      </div>
    </Panel>
  );
}

const LEGEND: [Kind, string, string][] = [
  ["heart", ORANGE, "H2S"],
  ["round", PINK, "CO2"],
  ["round", "#ff0000", "O2"],
  ["round", "#00ff00", "Methanol"],
  ["box", "#0000ff", "pH"],
];

function Legend() {
  return (
    <Panel className="mr-[10px] mb-[42px] h-[160px] w-[117px]" inner="bg-white">
      <ul className="pt-[10px] pl-3">
        {LEGEND.map(([kind, fill, name]) => (
          <li key={name} className="flex h-[26px] items-center gap-1 font-['Roboto',sans-serif] text-[14px] font-bold">
            <Icon kind={kind} fill={fill} />
            {name}
          </li>
        ))}
      </ul>
    </Panel>
  );
}

const TRENDS = ["Tr H2S\nCONC 1", "Tr H2S\nCONC 2", "Tr H2S\nCONC 3", "Tr CO2/O2\n/ MEOH CONC", "Tr DITCH\nPH 1", "Tr DITCH\nPH 2"];
const VIEWS = ["GRAPHICS\nOVERVIEW", "MS\nENVIRONMENT", "H2S\nENVIRONMENT"];

export default function App() {
  return (
    <div className="flex min-h-screen flex-col bg-[#848484] text-black">
      <Header />
      <main className="relative flex flex-1 flex-col justify-between">
        <SiteMap />

        <div className="relative flex items-start">
          <div className="ml-[15px]">
            <div className="mt-4 ml-[17px] flex gap-[14px]">
              {VIEWS.map((v) => <Button key={v} className={`${FACE} leading-[14px]`}>{v}</Button>)}
            </div>
            <div className="mt-[23px] ml-[55px] flex w-[203px] justify-center gap-[15px] border-2 border-white py-[10px]">
              <Button className={`h-[41px] w-20 bg-[#d4d0c8] text-[16px] font-light ${MONO}`}>ACK</Button>
              <Button className={`h-[41px] w-20 bg-[#d4d0c8] text-[16px] font-light ${MONO}`}>RESET</Button>
            </div>
            <div className="mt-[6px]">
              <PhPanel />
            </div>
          </div>
          <div className="mt-[7px] ml-[150px] w-[603px] border-2 border-t-white border-r-black border-b-black border-l-white bg-[#c0c0c0] p-[3px]">
            <h1 className="border-2 border-t-black border-r-white border-b-white border-l-black pr-2 text-center font-['Liberation_Sans',sans-serif] text-[18px] leading-[21px] text-[#947058]">
              ENVIRONMENT MONITORING
            </h1>
          </div>
        </div>

        <div className="relative flex items-end pb-[3px]">
          <div className="ml-9">
            <div className="ml-[34px]">
              <H2sPanel />
            </div>
            <div className="mt-[3px] mb-[2px] flex gap-[22px] pl-px">
              {TRENDS.map((t) => <Button key={t} className={`${FACE} leading-[15px]`}>{t}</Button>)}
            </div>
          </div>
          <div className="ml-[37px]">
            <GasPanel />
          </div>
          <div className="mr-4 ml-auto flex flex-col items-end">
            <Legend />
            <Co2Panel />
          </div>
        </div>

        <button
          type="button"
          className="absolute bottom-[3px] left-[2px] flex h-[25px] w-[62px] items-center justify-center gap-px border border-t-white border-r-[#404040] border-b-[#404040] border-l-white bg-[#d4d0c8] font-['Liberation_Sans',sans-serif] text-[16px]"
        >
          <svg viewBox="0 0 18 18" className="h-[18px] w-[18px]" aria-hidden="true">
            <path d="M3 3Q6 0 9 3L7.500 9Q5 7 1.500 8.500Z" fill="#e8502a" />
            <path d="M10 3.500Q13 6 17 3.500L15 9.500Q12 11 8.500 9Z" fill="#6fb43a" />
            <path d="M1.200 10Q4 8 7.200 10L5.500 16Q3 14 0 15.500Z" fill="#3a7bd5" />
            <path d="M8.200 10.500Q11 12.500 14.700 11L13 17Q10 18.500 6.500 16.500Z" fill="#f5c400" />
          </svg>
          Start
        </button>
      </main>
    </div>
  );
}
